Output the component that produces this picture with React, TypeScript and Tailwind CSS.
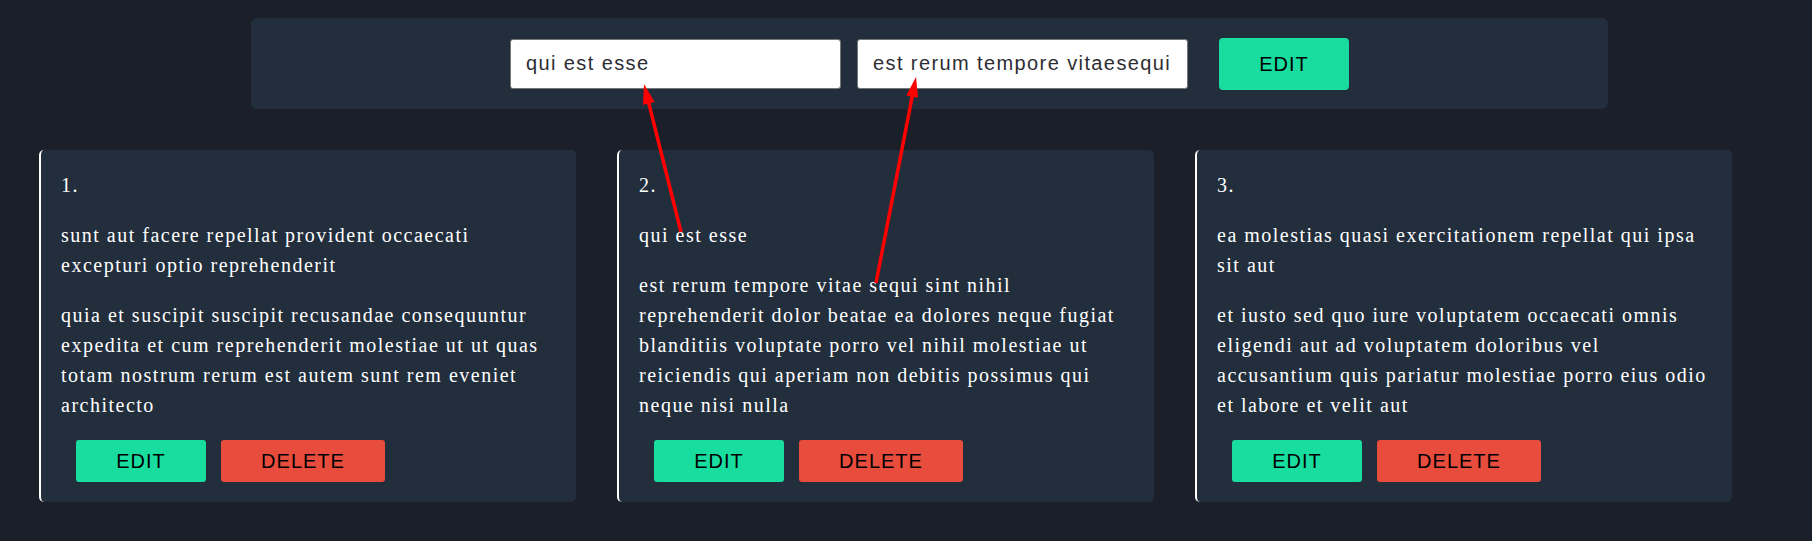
import React from "react";

const cards = [
  {
    n: "1.",
    title: "sunt aut facere repellat provident occaecati excepturi optio reprehenderit",
    body: "quia et suscipit suscipit recusandae consequuntur expedita et cum reprehenderit molestiae ut ut quas totam nostrum rerum est autem sunt rem eveniet architecto",
  },
  {
    n: "2.",
    title: "qui est esse",
    body: "est rerum tempore vitae sequi sint nihil reprehenderit dolor beatae ea dolores neque fugiat blanditiis voluptate porro vel nihil molestiae ut reiciendis qui aperiam non debitis possimus qui neque nisi nulla",
  },
  {
    n: "3.",
    title: "ea molestias quasi exercitationem repellat qui ipsa sit aut",
    body: "et iusto sed quo iure voluptatem occaecati omnis eligendi aut ad voluptatem doloribus vel accusantium quis pariatur molestiae porro eius odio et labore et velit aut",
  },
];

function Arrow({ sx, sy, tx, ty }: { sx: number; sy: number; tx: number; ty: number }) {
  const dx = tx - sx;
  const dy = ty - sy;
  const len = Math.hypot(dx, dy);
  const ux = dx / len;
  const uy = dy / len;
  const hl = 20;
  const hw = 6;
  const bx = tx - hl * ux;
  const by = ty - hl * uy;
  const nx = -uy;
  const ny = ux;
  const pts = `${tx},${ty} ${bx + hw * nx},${by + hw * ny} ${bx - hw * nx},${by - hw * ny}`;
  return (
    <g>
      <line x1={sx} y1={sy} x2={bx + 2 * ux} y2={by + 2 * uy} stroke="#ff0000" strokeWidth={3.5} />
      <polygon points={pts} fill="#ff0000" />
    </g>
  );
}

export default function App() {
  return (
    <div className="relative min-h-[541px] w-full bg-[#1a1f29] overflow-hidden">
      <div className="pt-[18px] pl-[251px]">
        <div className="w-[1357px] h-[91px] bg-[#222e3c] rounded-[6px] flex items-center justify-center">
          <input
            readOnly
            value="qui est esse"
            className="w-[331px] h-[50px] bg-white border border-[#767676] rounded-[3px] px-[15px] text-[20px] tracking-[1.4px] text-[#2d2d33] outline-none font-['Liberation_Sans',Arial,sans-serif]"
          />
          <input
            readOnly
            value="est rerum tempore vitaesequi"
            className="ml-[16px] w-[331px] h-[50px] bg-white border border-[#767676] rounded-[3px] px-[15px] text-[20px] tracking-[1.4px] text-[#2d2d33] outline-none font-['Liberation_Sans',Arial,sans-serif]"
          />
          <button className="ml-[31px] w-[130px] h-[52px] bg-[#18dd9f] rounded-[4px] text-[20px] tracking-[1px] text-black font-['Liberation_Sans',Arial,sans-serif]">
            EDIT
          </button>
        </div>
      </div>
      <div className="mt-[41px] pl-[39px] flex gap-[41px] items-stretch">
        {cards.map((c) => (
          <div
            key={c.n}
            className="w-[537px] bg-[#222e3c] border-l-2 border-white rounded-[5px] pt-[20px] pb-[20px] pl-[20px] pr-[20px] text-white text-[20px] leading-[30px] tracking-[1.5px] font-['Liberation_Serif','Times_New_Roman',serif]"
          >
            <p className="mb-[20px]">{c.n}</p>
            <p className="mb-[20px]">{c.title}</p>
            <p className="mb-[20px]">{c.body}</p>
            <div className="flex ml-[15px] gap-[15px]">
              <button className="w-[130px] h-[42px] bg-[#18dd9f] rounded-[3px] text-[20px] leading-none tracking-[1px] text-black font-['Liberation_Sans',Arial,sans-serif]">
                EDIT
              </button>
              <button className="w-[164px] h-[42px] bg-[#e74c3c] rounded-[3px] text-[20px] leading-none tracking-[1px] text-black font-['Liberation_Sans',Arial,sans-serif]">
                DELETE
              </button>
            </div>
          </div>
        ))}
      </div>
      <svg className="absolute left-0 top-0 pointer-events-none" width={1812} height={541}>
        <Arrow sx={681} sy={232} tx={644} ty={84} />
        <Arrow sx={876} sy={283} tx={916} ty={77} />
      </svg>
    </div>
  );
}
